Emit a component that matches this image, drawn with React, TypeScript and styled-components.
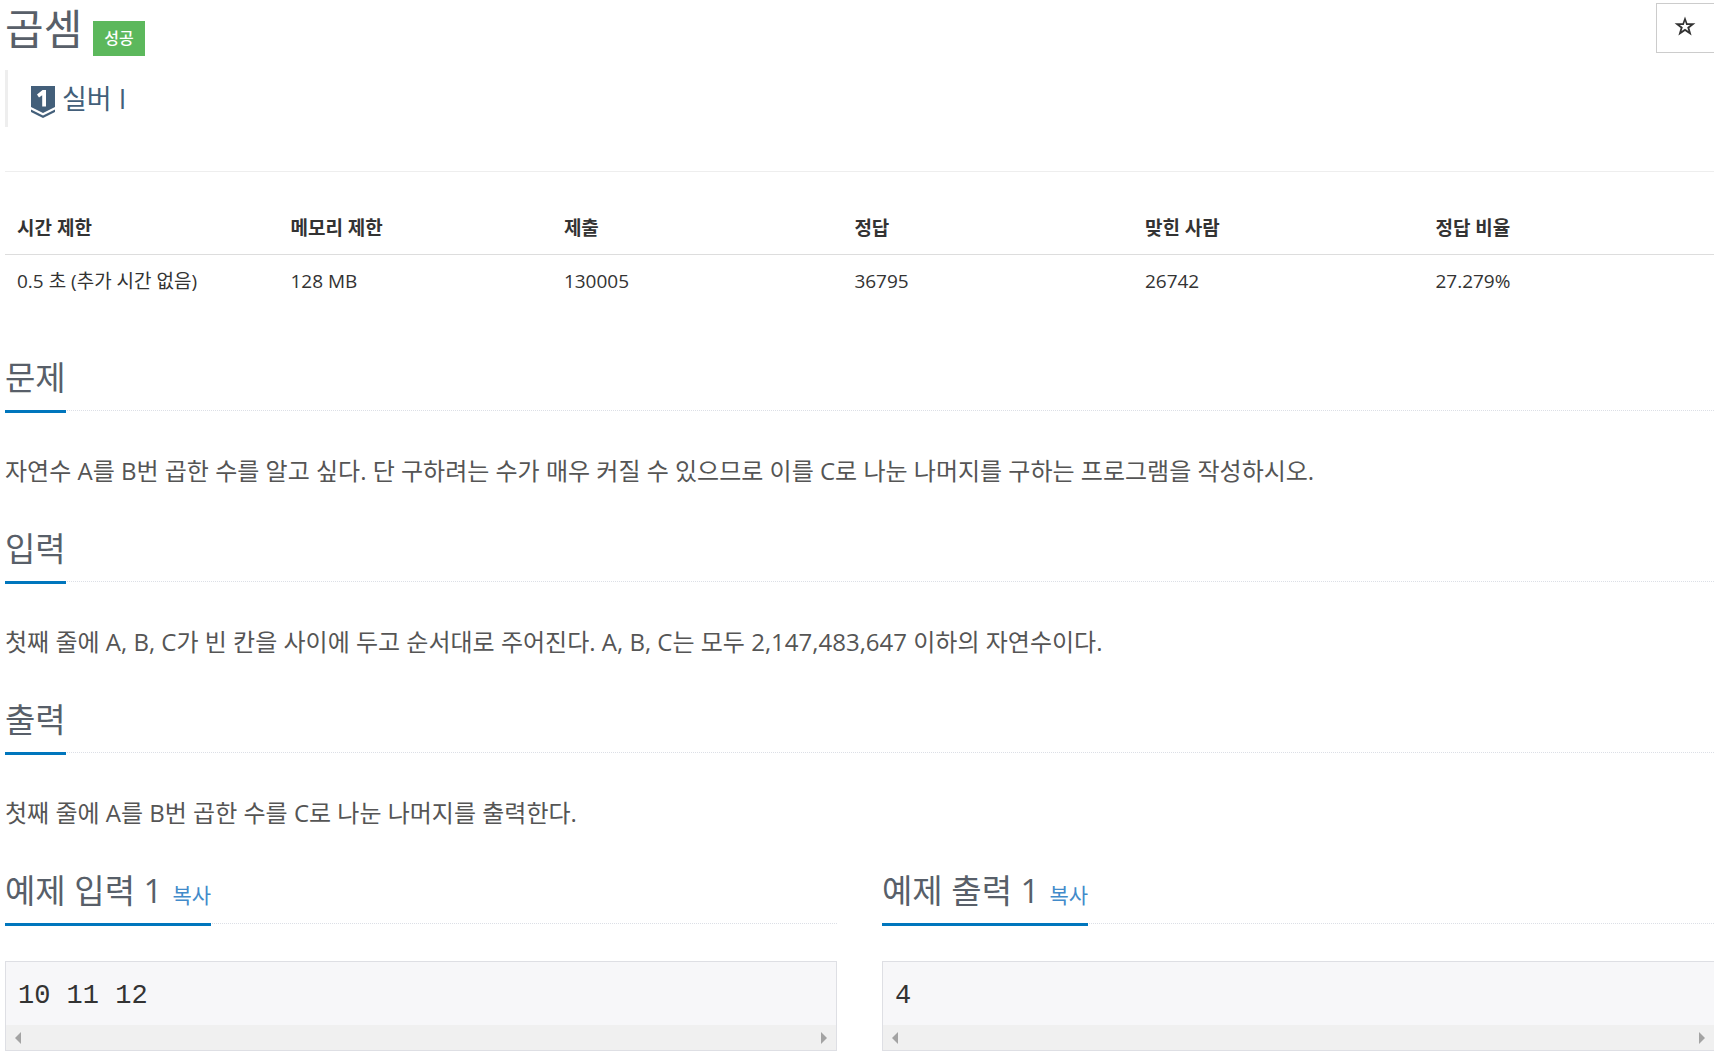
import React from 'react';
import styled, { createGlobalStyle } from 'styled-components';

const GlobalStyle = createGlobalStyle`
  * { box-sizing: border-box; }
  body {
    margin: 0;
    background: #fff;
    color: #555;
    font-family: "Open Sans", "Noto Sans CJK KR", sans-serif;
    font-size: 24px;
    line-height: 40px;
  }
`;

const Page = styled.main`
  padding: 0 6px 6px 5px;
`;

const Header = styled.header`
  display: flex;
  align-items: flex-start;
  height: 70px;
`;

const Title = styled.h1`
  margin: 0;
  font-size: 42px;
  font-weight: 400;
  line-height: 58px;
  color: #585f69;
`;

const Badge = styled.span`
  margin: 21px auto 0 11px;
  padding: 0 11px;
  background: #5cb85c;
  color: #fff;
  font-size: 16px;
  font-weight: 500;
  line-height: 35px;
`;

const StarButton = styled.button`
  display: flex;
  align-items: center;
  justify-content: center;
  width: 58px;
  height: 50px;
  margin-top: 3px;
  padding: 0 2px 4px 0;
  border: 1px solid #ccc;
  border-right: 0;
  background: #fff;
  color: #333;
`;

const Tier = styled.blockquote`
  display: flex;
  align-items: center;
  gap: 7px;
  height: 57px;
  margin: 0 0 44px;
  padding-left: 23px;
  border-left: 3px solid #eee;
  color: #435f7a;
  font-size: 27px;
`;

const TierIcon = styled.svg`
  margin-top: 6px;
`;

const Rule = styled.hr`
  margin: 0 0 30px;
  border: 0;
  border-top: 1px solid #eee;
`;

const InfoTable = styled.table`
  width: 100%;
  margin-bottom: 47px;
  border-collapse: separate;
  border-spacing: 0;
  table-layout: fixed;
  color: #333;
  font-size: 19px;
  line-height: 28px;
`;

const HeadCell = styled.th<{ $width: number }>`
  width: ${(p) => p.$width}%;
  padding: 12px;
  border-bottom: 1px solid #ddd;
  text-align: left;
  font-weight: 700;
`;

const Cell = styled.td`
  padding: 12px;
`;

const Section = styled.section`
  min-width: 0;
`;

const Headline = styled.div<{ $gap: number }>`
  display: flex;
  margin-bottom: ${(p) => p.$gap}px;
  border-bottom: 1px dotted #dcdfe6;
`;

const Heading = styled.h2`
  display: flex;
  align-items: baseline;
  gap: 10px;
  margin: 0 0 -3px;
  padding-bottom: 8px;
  border-bottom: 3px solid #0076bd;
  color: #585f69;
  font-size: 33px;
  font-weight: 400;
  line-height: 48px;
`;

const Paragraph = styled.p`
  margin: 0 0 34px;
`;

const CopyButton = styled.button`
  padding: 0;
  border: 0;
  background: none;
  color: #428bca;
  font: inherit;
  font-size: 21px;
  line-height: 28px;
  cursor: pointer;
`;

const Samples = styled.div`
  display: grid;
  grid-template-columns: 1fr 1fr;
  gap: 45px;
`;

const Sample = styled.div<{ $open?: boolean }>`
  border: 1px solid #dedfe4;
  border-right-width: ${(p) => (p.$open ? 0 : 1)}px;
  background: #f7f7f9;
`;

const Code = styled.pre`
  margin: 0;
  padding: 14px 12px 9px;
  color: #333;
  font-family: "Liberation Mono", monospace;
  font-size: 27px;
  line-height: 40px;
`;

const ScrollTrack = styled.div`
  display: flex;
  justify-content: space-between;
  height: 25px;
  padding: 0 9px;
  background: #f0f0f0;
`;

const ScrollButton = styled.button`
  display: flex;
  align-items: center;
  padding: 0;
  border: 0;
  background: none;
  color: #a3a3a3;
`;

const columns = [
  { label: '시간 제한', value: '0.5 초 (추가 시간 없음)', width: 16 },
  { label: '메모리 제한', value: '128 MB', width: 16 },
  { label: '제출', value: '130005', width: 17 },
  { label: '정답', value: '36795', width: 17 },
  { label: '맞힌 사람', value: '26742', width: 17 },
  { label: '정답 비율', value: '27.279%', width: 17 },
];

const sections = [
  {
    title: '문제',
    body: '자연수 A를 B번 곱한 수를 알고 싶다. 단 구하려는 수가 매우 커질 수 있으므로 이를 C로 나눈 나머지를 구하는 프로그램을 작성하시오.',
  },
  {
    title: '입력',
    body: '첫째 줄에 A, B, C가 빈 칸을 사이에 두고 순서대로 주어진다. A, B, C는 모두 2,147,483,647 이하의 자연수이다.',
  },
  { title: '출력', body: '첫째 줄에 A를 B번 곱한 수를 C로 나눈 나머지를 출력한다.' },
];

const samples = [
  { title: '예제 입력 1', code: '10 11 12', open: false },
  { title: '예제 출력 1', code: '4', open: true },
];

function Arrow({ points }: { points: string }) {
  return (
    <svg width="6" height="12" viewBox="0 0 6 12" aria-hidden="true">
      <polygon points={points} fill="currentColor" />
    </svg>
  );
}

export default function App() {
  return (
    <Page>
      <GlobalStyle />
      <Header>
        <Title>곱셈</Title>
        <Badge>성공</Badge>
        <StarButton aria-label="즐겨찾기">
          <svg width="22" height="20" viewBox="0 0 22 20" aria-hidden="true">
            <path
              fillRule="evenodd"
              d="M11 0.5 L13.4 7.2 H21.4 L15.4 11.9 L17.6 19.4 L11 15 L4.4 19.4 L6.6 11.9 L0.6 7.2 H8.6 Z M11 5.2 L9.8 9 H5.8 L8.8 11.3 L7.6 15 L11 12.7 L14.4 15 L13.2 11.3 L16.2 9 H12.2 Z"
              fill="currentColor"
            />
          </svg>
        </StarButton>
      </Header>
      <Tier>
        <TierIcon width="24" height="32" viewBox="0 0 24 32" aria-hidden="true">
          <path d="M0 0 H24 V21 L12 27 L0 21 Z" fill="#435f7a" />
          <path d="M0 23.5 L12 29.5 L24 23.5 V26 L12 32 L0 26 Z" fill="#435f7a" />
          <path d="M11.6 4 H15 V20.6 H11.2 V9.2 L8 11.4 L6 8.4 Z" fill="#fff" />
        </TierIcon>
        <span>실버 I</span>
      </Tier>
      <Rule />
      <InfoTable>
        <thead>
          <tr>
            {columns.map((c) => (
              <HeadCell key={c.label} scope="col" $width={c.width}>{c.label}</HeadCell>
            ))}
          </tr>
        </thead>
        <tbody>
          <tr>
            {columns.map((c) => (
              <Cell key={c.label}>{c.value}</Cell>
            ))}
          </tr>
        </tbody>
      </InfoTable>
      {sections.map((s) => (
        <Section key={s.title}>
          <Headline $gap={40}>
            <Heading>{s.title}</Heading>
          </Headline>
          <Paragraph>{s.body}</Paragraph>
        </Section>
      ))}
      <Samples>
        {samples.map((s) => (
          <Section key={s.title}>
            <Headline $gap={37}>
              <Heading>
                {s.title}
                <CopyButton>복사</CopyButton>
              </Heading>
            </Headline>
            <Sample $open={s.open}>
              <Code>{s.code}</Code>
              <ScrollTrack>
                <ScrollButton aria-label="왼쪽으로 스크롤">
                  <Arrow points="6,0 6,12 0,6" />
                </ScrollButton>
                <ScrollButton aria-label="오른쪽으로 스크롤">
                  <Arrow points="0,0 0,12 6,6" />
                </ScrollButton>
              </ScrollTrack>
            </Sample>
          </Section>
        ))}
      </Samples>
    </Page>
  );
}
